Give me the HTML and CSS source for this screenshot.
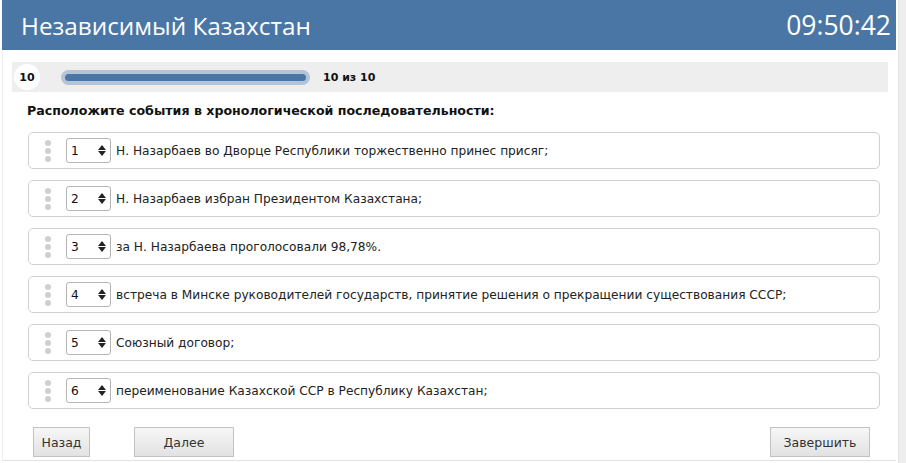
FILE: index.html
```html
<!DOCTYPE html>
<html lang="ru">
<head>
<meta charset="utf-8">
<title>Независимый Казахстан</title>
<link rel="stylesheet" href="styles.css">
</head>
<body>
<div class="page">
  <div class="panel">
    <header class="header">
      <h1 class="title">Независимый Казахстан</h1>
      <div class="timer">09:50:42</div>
    </header>
    <div class="progress">
      <div class="num-badge">10</div>
      <div class="track"><div class="fill"></div></div>
      <div class="count">10 из 10</div>
    </div>
    <div class="question">Расположите события в хронологической последовательности:</div>
    <ul class="items">
      <li class="item"><span class="handle"><i></i><i></i><i></i></span><span class="sel"><span class="sel-val">1</span><span class="arrows"></span></span><span class="text">Н. Назарбаев во Дворце Республики торжественно принес присяг;</span></li>
      <li class="item"><span class="handle"><i></i><i></i><i></i></span><span class="sel"><span class="sel-val">2</span><span class="arrows"></span></span><span class="text">Н. Назарбаев избран Президентом Казахстана;</span></li>
      <li class="item"><span class="handle"><i></i><i></i><i></i></span><span class="sel"><span class="sel-val">3</span><span class="arrows"></span></span><span class="text">за Н. Назарбаева проголосовали 98,78%.</span></li>
      <li class="item"><span class="handle"><i></i><i></i><i></i></span><span class="sel"><span class="sel-val">4</span><span class="arrows"></span></span><span class="text">встреча в Минске руководителей государств, принятие решения о прекращении существования СССР;</span></li>
      <li class="item"><span class="handle"><i></i><i></i><i></i></span><span class="sel"><span class="sel-val">5</span><span class="arrows"></span></span><span class="text">Союзный договор;</span></li>
      <li class="item"><span class="handle"><i></i><i></i><i></i></span><span class="sel"><span class="sel-val">6</span><span class="arrows"></span></span><span class="text">переименование Казахской ССР в Республику Казахстан;</span></li>
    </ul>
    <div class="buttons">
      <button class="btn btn-back">Назад</button>
      <button class="btn btn-next">Далее</button>
      <span class="spacer"></span>
      <button class="btn btn-finish">Завершить</button>
    </div>
  </div>
  <div class="side"></div>
</div>
</body>
</html>
```
FILE: styles.css
```css
* { box-sizing: border-box; }
html, body { margin: 0; padding: 0; background: #fff; }
body { font-family: "DejaVu Sans", Verdana, sans-serif; color: #222; }

.page { display: flex; height: 463px; }
.panel {
  margin-left: 2px;
  width: 896px;
  height: 461px;
  border-left: 1px solid #eeeeee;
  border-bottom: 1px solid #e2e2e2;
  display: flex;
  flex-direction: column;
}
.side { width: 8px; margin-left: 2px; background: #eeeeee; border-left: 1px solid #e4e4e4; }

.header {
  height: 50px;
  background: #4a76a6;
  display: flex;
  align-items: center;
  justify-content: space-between;
  padding: 0 5px 0 19px;
  margin-left: -1px;
}
.title {
  margin: 0;
  font-family: "Open Sans", sans-serif;
  font-weight: 400;
  font-size: 24.3px;
  color: #fff;
}
.timer {
  font-family: "Open Sans", sans-serif;
  font-size: 26.5px;
  color: #fff;
}

.progress {
  margin: 12px 8px 0 9px;
  height: 30px;
  background: #eeeeee;
  display: flex;
  align-items: center;
  padding-left: 2px;
}
.num-badge {
  width: 26px; height: 26px;
  border-radius: 50%;
  background: #fff;
  font-weight: bold;
  font-size: 11px;
  color: #111;
  display: flex; align-items: center; justify-content: center;
}
.track {
  margin-left: 21px;
  width: 249px;
  height: 15px;
  border-radius: 8px;
  background: #b3c3d8;
  padding: 4px;
}
.fill { height: 7px; border-radius: 4px; background: #4a76a6; }
.count { margin-left: 13px; font-weight: bold; font-size: 11px; color: #111; }

.question {
  margin: 10px 0 0 24px;
  font-weight: bold;
  font-size: 12.6px;
  color: #111;
  height: 20px;
  line-height: 18px;
}

.items { list-style: none; margin: 10px 0 0 25px; padding: 0; width: 852px; display: flex; flex-direction: column; gap: 11px; }
.item {
  height: 37px;
  border: 1px solid #d0d0d0;
  border-radius: 5px;
  display: flex;
  align-items: center;
  padding-left: 16px;
}
.handle { width: 6px; display: flex; flex-direction: column; gap: 2px; }
.handle i { display: block; width: 6px; height: 6px; border-radius: 50%; background: #cfcfcf; }
.sel {
  margin-left: 15px;
  width: 45px; height: 25px;
  border: 1px solid #b5b5b5;
  border-radius: 3px;
  background: #fff;
  display: flex; align-items: center;
  padding-left: 4px;
  font-size: 12.2px;
  color: #111;
}
.sel-val { flex: 1; }
.arrows { width: 12px; height: 12px; position: relative; margin-right: 2px; }
.arrows::before, .arrows::after {
  content: ""; position: absolute; left: 2px;
  border-left: 4px solid transparent; border-right: 4px solid transparent;
}
.arrows::before { top: 0; border-bottom: 5px solid #222; }
.arrows::after { top: 6px; border-top: 5px solid #222; }
.text { margin-left: 5px; font-size: 12.2px; color: #222; }

.buttons { display: flex; align-items: center; margin: 18px 0 0 30px; padding-right: 26px; }
.spacer { flex: 1; }
.btn {
  height: 30px;
  border: 1px solid #c2c2c2;
  border-radius: 0;
  background: linear-gradient(#f7f7f7, #e2e2e2);
  font-family: "DejaVu Sans", Verdana, sans-serif;
  font-size: 12.5px;
  color: #333;
  padding: 0;
}
.btn-back { width: 57px; }
.btn-next { width: 100px; margin-left: 44px; }
.btn-finish { width: 100px; }
```
